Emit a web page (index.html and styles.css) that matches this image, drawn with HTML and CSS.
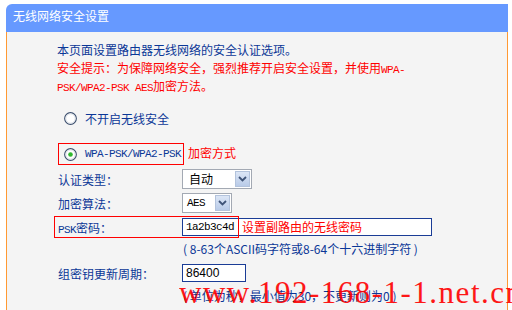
FILE: index.html
```html
<!DOCTYPE html>
<html lang="zh-CN">
<head>
<meta charset="utf-8">
<title>无线网络安全设置</title>
<link rel="stylesheet" href="styles.css">
</head>
<body>
<div class="panel">
  <div class="title">无线网络安全设置</div>
  <div class="body">
    <p class="intro">本页面设置路由器无线网络的安全认证选项。</p>
    <p class="warn">安全提示：为保障网络安全，强烈推荐开启安全设置，并使用<span class="mono">WPA-</span><br><span class="mono">PSK/WPA2-PSK AES</span>加密方法。</p>

    <div class="radio-row">
      <svg class="radio" width="13" height="13" viewBox="0 0 13 13"><circle cx="6.5" cy="6.5" r="5.8" fill="#fff" stroke="#3c4f6e" stroke-width="1.2"/><circle cx="6.5" cy="6.5" r="4.6" fill="none" stroke="#dfe4ea" stroke-width="1"/></svg>
      <span>不开启无线安全</span>
    </div>

    <div class="radio-row selected">
      <span class="boxed">
        <svg class="radio" width="13" height="13" viewBox="0 0 13 13"><circle cx="6.5" cy="6.5" r="5.8" fill="#fff" stroke="#3c4f6e" stroke-width="1.2"/><circle cx="6.5" cy="6.5" r="4.6" fill="none" stroke="#dfe4ea" stroke-width="1"/><circle cx="6.5" cy="6.5" r="2.3" fill="#2fb82f"/></svg>
        <span class="mono">WPA-PSK/WPA2-PSK</span>
      </span>
      <span class="note">加密方式</span>
    </div>

    <div class="form">
      <div class="row r1">
        <span class="label">认证类型：</span>
        <span class="select w70"><span class="val">自动</span><span class="arrow"><svg width="9" height="6" viewBox="0 0 9 6"><path d="M1 1 L4.5 4.5 L8 1" fill="none" stroke="#3f5478" stroke-width="1.8"/></svg></span></span>
      </div>
      <div class="row r2">
        <span class="label">加密算法：</span>
        <span class="select w50"><span class="val mono">AES</span><span class="arrow"><svg width="9" height="6" viewBox="0 0 9 6"><path d="M1 1 L4.5 4.5 L8 1" fill="none" stroke="#3f5478" stroke-width="1.8"/></svg></span></span>
      </div>
      <div class="row r3 psk">
        <span class="label"><span class="mono">PSK</span>密码：</span>
        <span class="input wide"><span class="mono">1a2b3c4d</span></span>
        <span class="annot">设置副路由的无线密码</span>
      </div>
      <div class="row hint">( 8-63个ASCII码字符或8-64个十六进制字符 )</div>
      <div class="row r5">
        <span class="label">组密钥更新周期：</span>
        <span class="input short"><span class="num">86400</span></span>
      </div>
      <div class="row hint last">( 单位为秒，最小值为30，不更新则为0 )</div>
    </div>
  </div>
</div>
<div class="watermark">www.192-168-1-1.net.cn</div>
</body>
</html>
```

FILE: styles.css
```css
html, body {
  margin: 0;
  padding: 0;
  background: #ffffff;
  width: 512px;
  height: 310px;
  overflow: hidden;
}
body {
  position: relative;
  font-family: "Noto Sans CJK SC", "Liberation Sans", sans-serif;
  font-size: 12px;
  color: #0b3797;
}
.panel {
  margin: 4px 0 0 6px;
  width: 502px;
}
.title {
  height: 28px;
  box-sizing: border-box;
  background: #6699ff;
  border-top-left-radius: 6px;
  color: #ffffff;
  font-size: 12px;
  line-height: 24px;
  padding-left: 7px;
}
.body {
  background: #f4f4f4;
  border-left: 1px solid #ff9933;
  border-right: 1px solid #ff9933;
  height: 290px;
  padding: 9px 0 0 50px;
  box-sizing: border-box;
}
p {
  margin: 0;
  line-height: 18px;
}
.intro {
  height: 18px;
}
.warn {
  color: #ff0000;
  height: 36px;
}
.mono {
  font-family: "Liberation Mono", monospace;
  font-size: 11px;
  letter-spacing: -0.6px;
  line-height: 0;
}
.radio-row {
  display: flex;
  align-items: center;
  height: 18px;
  margin-top: 14px;
  padding-left: 7px;
}
.radio-row .radio {
  margin-right: 8px;
  flex: none;
}
.radio-row.selected {
  margin-top: 16px;
  height: 22px;
  padding-left: 1px;
}
.boxed {
  display: flex;
  align-items: center;
  height: 20px;
  border: 1px solid #ff0000;
  padding: 0 2px 0 5px;
}
.note {
  color: #ff0000;
  margin-left: 4px;
  margin-top: -4px;
}
.form {
  padding-left: 1px;
}
.row {
  display: flex;
  align-items: center;
  height: 20px;
  position: relative;
}
.label {
  width: 124px;
  flex: none;
}
.r1 { margin-top: 4px; }
.r2 { margin-top: 4px; }
.r3 { margin-top: 4px; }
.select {
  display: flex;
  height: 20px;
  box-sizing: border-box;
  border: 1px solid #a3a9b3;
  background: #ffffff;
  color: #000000;
}
.select.w70 { width: 70px; }
.select.w50 { width: 50px; }
.select .val {
  flex: 1;
  padding-left: 6px;
  line-height: 18px;
}
.select .val.mono { padding-left: 4px; line-height: 18px; }
.arrow {
  width: 15px;
  margin: 1px;
  box-sizing: border-box;
  background: linear-gradient(#dce6f6, #b9cbe8);
  border: 1px solid #b3c3dc;
  display: flex;
  align-items: center;
  justify-content: center;
}
.input {
  display: flex;
  align-items: center;
  height: 18px;
  box-sizing: border-box;
  border: 1px solid #1a3c96;
  background: #ffffff;
  color: #000000;
  padding-left: 3px;
}
.input .mono { line-height: 16px; }
.input.wide { width: 250px; }
.input.short { width: 64px; }
.num {
  font-family: "Liberation Sans", sans-serif;
  font-size: 12px;
}
.psk::before {
  content: "";
  position: absolute;
  left: -4px;
  top: -1px;
  width: 183px;
  height: 20px;
  border: 1px solid #ff0000;
  pointer-events: none;
}
.annot {
  position: absolute;
  left: 184px;
  top: 1px;
  line-height: 18px;
  color: #ff0000;
}
.hint {
  margin-top: 2px;
  height: 18px;
  padding-left: 125px;
}
.r5 { margin-top: 6px; }
.hint.last { margin-top: 3px; }
.watermark {
  position: absolute;
  left: 179px;
  top: 275px;
  font-family: "Liberation Serif", serif;
  font-size: 31px;
  letter-spacing: 1.5px;
  color: #ff0000;
  opacity: 0.9;
  white-space: nowrap;
}
```
